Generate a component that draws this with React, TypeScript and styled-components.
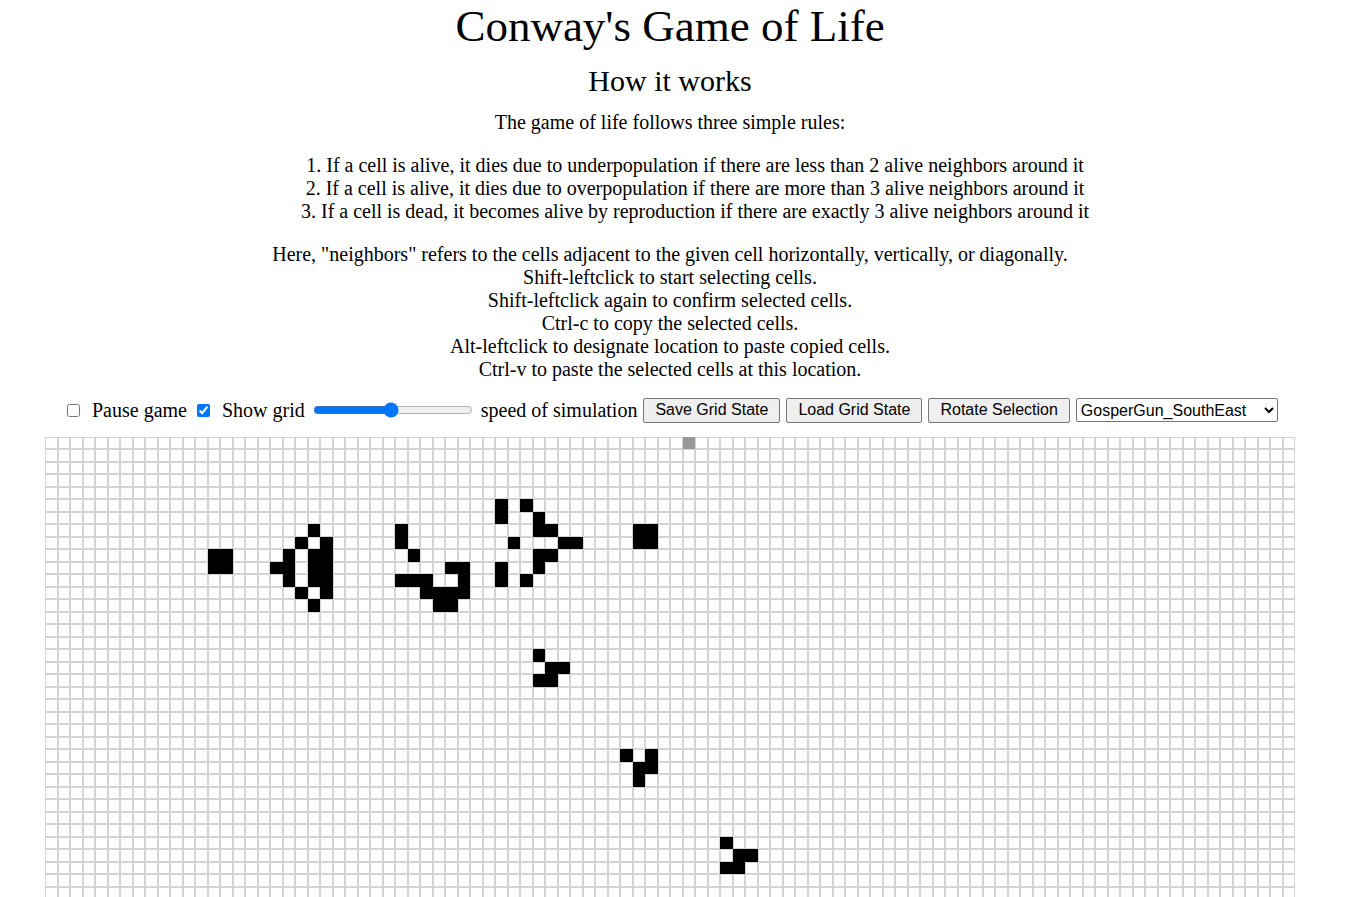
import React from "react";
import styled, { createGlobalStyle } from "styled-components";

const GlobalStyle = createGlobalStyle`
  html, body {
    margin: 0;
    padding: 0;
    background: #ffffff;
  }
  body {
    font-family: "Liberation Serif", "Times New Roman", serif;
    color: #000000;
  }
`;

const Page = styled.div`
  width: 1340px;
  text-align: center;
`;

const Title = styled.h1`
  margin: 0;
  font-size: 45px;
  font-weight: normal;
  line-height: normal;
`;

const Subtitle = styled.h2`
  margin: 12px 0 0;
  font-size: 30px;
  font-weight: normal;
  line-height: normal;
`;

const Intro = styled.p`
  margin: 13px 0 0;
  font-size: 20px;
  line-height: normal;
`;

const Rules = styled.ol`
  margin: 20px 0 0;
  padding-left: 50px;
  list-style-position: inside;
  font-size: 20px;
  line-height: normal;
`;

const Notes = styled.p`
  margin: 20px 0 0;
  font-size: 20px;
  line-height: normal;
`;

const Controls = styled.div`
  display: flex;
  align-items: center;
  justify-content: flex-start;
  height: 26px;
  margin-top: 16px;
  padding-left: 63px;
  font-size: 20px;
`;

const Check = styled.input.attrs({ type: "checkbox" })`
  width: 13px;
  height: 13px;
  margin: 0 12px 0 4px;
`;

const Label = styled.span<{ $gap: number }>`
  margin-right: ${(p) => p.$gap}px;
  white-space: nowrap;
`;

const Slider = styled.input.attrs({ type: "range" })`
  width: 160px;
  margin: 0 8px 0 0;
`;

const Button = styled.button`
  font-family: "Liberation Sans", Arial, sans-serif;
  font-size: 16px;
  height: 25px;
  padding: 0 11px;
  margin-right: 6px;
  background: #efefef;
  color: #000;
  border: 1px solid #767676;
  border-radius: 2px;
  white-space: nowrap;
`;

const Select = styled.select`
  font-family: "Liberation Sans", Arial, sans-serif;
  font-size: 16px;
  width: 202px;
  height: 24px;
  margin-left: 0;
  color: #000;
  background: #fff;
  border: 1px solid #767676;
  border-radius: 2px;
`;

const Board = styled.div`
  display: grid;
  grid-template-columns: repeat(100, 12.5px);
  grid-auto-rows: 12.5px;
  width: 1250px;
  margin: 13.5px auto 0;
`;

type CellState = "dead" | "alive" | "marked";

const Cell = styled.div<{ $state: CellState }>`
  box-sizing: border-box;
  border: 1px solid
    ${(p) =>
      p.$state === "alive" ? "#000" : p.$state === "marked" ? "#999" : "#d3d3d3"};
  background: ${(p) =>
    p.$state === "alive" ? "#000" : p.$state === "marked" ? "#999" : "#fff"};
`;

const COLS = 100;
const ROWS = 38;

const alive: [number, number][] = [
  // left block
  [13, 9], [14, 9], [13, 10], [14, 10],
  // queen bee shuttle
  [21, 7], [20, 8], [22, 8], [19, 9], [21, 9], [22, 9],
  [18, 10], [19, 10], [21, 10], [22, 10], [19, 11], [21, 11], [22, 11],
  [20, 12], [22, 12], [21, 13],
  // middle piece
  [28, 7], [28, 8], [29, 9], [32, 10], [33, 10], [28, 11], [29, 11], [30, 11],
  [33, 11], [30, 12], [31, 12], [32, 12], [33, 12], [31, 13], [32, 13],
  // right shuttle
  [36, 5], [38, 5], [36, 6], [39, 6], [39, 7], [40, 7], [37, 8], [41, 8],
  [42, 8], [39, 9], [40, 9], [36, 10], [39, 10], [36, 11], [38, 11],
  // right block
  [47, 7], [48, 7], [47, 8], [48, 8],
  // gliders
  [39, 17], [40, 18], [41, 18], [39, 19], [40, 19],
  [46, 25], [48, 25], [47, 26], [48, 26], [47, 27],
  [54, 32], [55, 33], [56, 33], [54, 34], [55, 34],
];

const aliveSet = new Set(alive.map(([c, r]) => `${c},${r}`));
const marked = new Set(["51,0"]);

function stateOf(c: number, r: number): CellState {
  const k = `${c},${r}`;
  if (aliveSet.has(k)) return "alive";
  if (marked.has(k)) return "marked";
  return "dead";
}

export default function App() {
  const cells: React.ReactNode[] = [];
  for (let r = 0; r < ROWS; r++) {
    for (let c = 0; c < COLS; c++) {
      cells.push(<Cell key={`${c}-${r}`} $state={stateOf(c, r)} />);
    }
  }
  return (
    <>
      <GlobalStyle />
      <Page>
        <Title>Conway's Game of Life</Title>
        <Subtitle>How it works</Subtitle>
        <Intro>The game of life follows three simple rules:</Intro>
        <Rules>
          <li>If a cell is alive, it dies due to underpopulation if there are less than 2 alive neighbors around it</li>
          <li>If a cell is alive, it dies due to overpopulation if there are more than 3 alive neighbors around it</li>
          <li>If a cell is dead, it becomes alive by reproduction if there are exactly 3 alive neighbors around it</li>
        </Rules>
        <Notes>
          Here, "neighbors" refers to the cells adjacent to the given cell horizontally, vertically, or diagonally.
          <br />
          Shift-leftclick to start selecting cells.
          <br />
          Shift-leftclick again to confirm selected cells.
          <br />
          Ctrl-c to copy the selected cells.
          <br />
          Alt-leftclick to designate location to paste copied cells.
          <br />
          Ctrl-v to paste the selected cells at this location.
        </Notes>
        <Controls>
          <Check />
          <Label $gap={6}>Pause game</Label>
          <Check defaultChecked />
          <Label $gap={8}>Show grid</Label>
          <Slider min={0} max={100} defaultValue={49} />
          <Label $gap={6}>speed of simulation</Label>
          <Button>Save Grid State</Button>
          <Button>Load Grid State</Button>
          <Button>Rotate Selection</Button>
          <Select defaultValue="GosperGun_SouthEast">
            <option value="GosperGun_SouthEast">GosperGun_SouthEast</option>
            <option value="GosperGun_NorthEast">GosperGun_NorthEast</option>
            <option value="Glider">Glider</option>
          </Select>
        </Controls>
        <Board>{cells}</Board>
      </Page>
    </>
  );
}
